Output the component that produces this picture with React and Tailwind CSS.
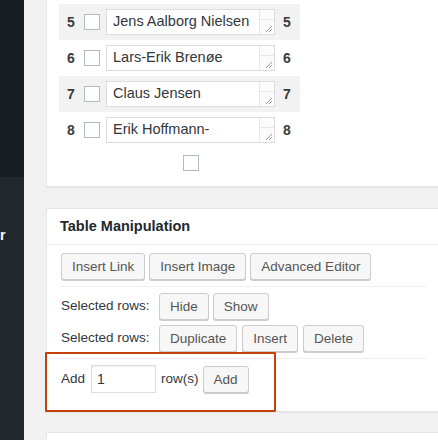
import React from 'react';

const names = [
  { n: 5, name: 'Jens Aalborg Nielsen' },
  { n: 6, name: 'Lars-Erik Brenøe' },
  { n: 7, name: 'Claus Jensen' },
  { n: 8, name: 'Erik Hoffmann-' },
];

function Btn({ children }) {
  return (
    <button className="h-[27px] px-[10px] border border-[#cccccc] bg-[#f7f7f7] rounded-[3px] shadow-[0_1px_0_#cccccc] text-[13.5px] text-[#555555] leading-[25px] whitespace-nowrap">
      {children}
    </button>
  );
}

function Box() {
  return <div className="w-[16px] h-[16px] shrink-0 border border-[#b4b9be] bg-white" />;
}

function NameField({ value }) {
  return (
    <div className="relative w-[169px] h-[26px] border border-[#dddddd] bg-white flex items-center">
      <span className="pl-[6px] text-[14.5px] text-[#32373c] whitespace-nowrap overflow-hidden w-[152px]">{value}</span>
      <div className="absolute right-0 top-0 bottom-0 w-[15px] border-l border-[#e8e8e8] bg-[#fbfbfb] flex flex-col">
        <div className="h-[10px] border-b border-[#e8e8e8]" />
        <div className="flex-1 flex items-end justify-end">
          <svg width="8" height="8" viewBox="0 0 8 8" className="mr-[1px] mb-[1px]">
            <path d="M7 1 L1 7 M7 4 L4 7" stroke="#8c8f94" strokeWidth="0.9" fill="none" />
          </svg>
        </div>
      </div>
    </div>
  );
}

export default function App() {
  return (
    <div className="relative w-[438px] h-[440px] overflow-hidden flex bg-[#f1f1f1] font-['Liberation_Sans',Arial,sans-serif]">
      {/* admin menu edge */}
      <div className="w-[24px] shrink-0 flex flex-col">
        <div className="h-[177px] bg-[#191e23]" />
        <div className="flex-1 bg-[#23282d] pt-[48px]">
          <span className="block text-white font-bold text-[14px] leading-[20px]">r</span>
        </div>
      </div>

      <div className="flex-1 pl-[22px] flex flex-col">
        {/* names table */}
        <div className="h-[187px] bg-white border-l border-b border-[#e5e5e5] shadow-[0_1px_1px_rgba(0,0,0,0.04)] px-[12px] pt-[4px]">
          <div className="w-[241px]">
            {names.map((r, i) => (
              <div key={r.n} className={`h-[36px] flex items-center ${i % 2 === 0 ? 'bg-[#f2f2f2]' : ''}`}>
                <span className="w-[25px] pl-[8px] text-[14px] font-bold text-[#3c3c3c]">{r.n}</span>
                <Box />
                <div className="ml-[6px]">
                  <NameField value={r.name} />
                </div>
                <span className="ml-[8px] text-[14px] font-bold text-[#3c3c3c]">{r.n}</span>
              </div>
            ))}
          </div>
          <div className="mt-[7px] pl-[124px]">
            <Box />
          </div>
        </div>

        {/* table manipulation */}
        <div className="mt-[21px] h-[204px] bg-white border border-r-0 border-[#e5e5e5] shadow-[0_1px_1px_rgba(0,0,0,0.04)]">
          <div className="h-[36px] border-b border-[#eeeeee] px-[13px] flex items-center">
            <h3 className="text-[14.5px] font-bold text-[#23282d]">Table Manipulation</h3>
          </div>
          <div className="px-[12px] pt-[8px]">
            <div className="pl-[2px] flex gap-[4px]">
              <Btn>Insert Link</Btn>
              <Btn>Insert Image</Btn>
              <Btn>Advanced Editor</Btn>
            </div>
            <div className="mt-[6px] border-t border-[#eeeeee]" />
            <div className="pl-[2px] mt-[6px] flex items-center">
              <span className="w-[98px] text-[13.5px] text-[#32373c]">Selected rows:</span>
              <div className="flex gap-[4px]">
                <Btn>Hide</Btn>
                <Btn>Show</Btn>
              </div>
            </div>
            <div className="pl-[2px] mt-[5px] flex items-center">
              <span className="w-[98px] text-[13.5px] text-[#32373c]">Selected rows:</span>
              <div className="flex gap-[5px]">
                <Btn>Duplicate</Btn>
                <Btn>Insert</Btn>
                <Btn>Delete</Btn>
              </div>
            </div>
            <div className="mt-[6px] border-t border-[#eeeeee]" />
            <div className="pl-[2px] mt-[6px] flex items-center">
              <span className="text-[13.5px] text-[#32373c]">Add</span>
              <div className="ml-[6px] w-[65px] h-[28px] border border-[#dddddd] bg-white flex items-center pl-[5px] text-[14px] text-[#32373c] shadow-[inset_0_1px_2px_rgba(0,0,0,0.07)]">1</div>
              <span className="ml-[5px] text-[13.5px] text-[#32373c]">row(s)</span>
              <div className="ml-[4px]">
                <Btn>Add</Btn>
              </div>
            </div>
          </div>
        </div>

        {/* next panel */}
        <div className="mt-[20px] flex-1 bg-white border-l border-t border-[#e5e5e5]" />
      </div>

      {/* annotation highlight */}
      <div className="absolute left-[45px] top-[352px] w-[231px] h-[60px] border-2 border-[#c4410c] rounded-[1px]" />
    </div>
  );
}
